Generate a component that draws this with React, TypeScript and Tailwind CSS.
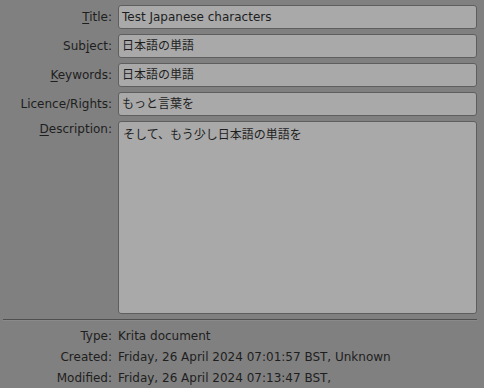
const font = { fontFamily: '"DejaVu Sans", "Noto Sans CJK JP", sans-serif' };

const fields = [
  { pre: "", key: "T", post: "itle:", value: "Test Japanese characters" },
  { pre: "Sub", key: "j", post: "ect:", value: "日本語の単語" },
  { pre: "", key: "K", post: "eywords:", value: "日本語の単語" },
  { pre: "Licence/Rights:", key: "", post: "", value: "もっと言葉を" },
];

const info = [
  { label: "Type:", value: "Krita document" },
  { label: "Created:", value: "Friday, 26 April 2024 07:01:57 BST, Unknown" },
  { label: "Modified:", value: "Friday, 26 April 2024 07:13:47 BST," },
];

const Label = ({ pre, k, post }: { pre: string; k: string; post: string }) => (
  <span className="w-[112px] shrink-0 text-right">
    {pre}
    {k && <span className="underline underline-offset-2">{k}</span>}
    {post}
  </span>
);

export default function App() {
  return (
    <div
      className="h-[388px] w-[484px] overflow-hidden bg-[#808080] text-[12px] text-[#1e1e1e]"
      style={font}
    >
      <div className="flex flex-col gap-[5px] pr-[7px] pt-[5px]">
        {fields.map((f) => (
          <div key={f.value + f.pre} className="flex items-center gap-[6px]">
            <Label pre={f.pre} k={f.key} post={f.post} />
            <div className="flex h-[24px] flex-1 items-center rounded-[3px] border border-[#5e5e5e] bg-[#a9a9a9] px-[3px]">
              {f.value}
            </div>
          </div>
        ))}
        <div className="flex items-start gap-[6px]">
          <div className="-mt-[1px] flex w-[112px] shrink-0 justify-end">
            <Label pre="" k="D" post="escription:" />
          </div>
          <div className="h-[193px] flex-1 rounded-[3px] border border-[#5e5e5e] bg-[#a9a9a9] px-[4px] py-[4px]">
            そして、もう少し日本語の単語を
          </div>
        </div>
      </div>
      <div className="ml-[3px] mr-[7px] mt-[5px] border-t border-b border-t-[#4f4f4f] border-b-[#8a8a8a]" />
      <div className="mt-[6px] flex flex-col gap-[4px]">
        {info.map((r) => (
          <div key={r.label} className="flex h-[17px] items-center gap-[6px]">
            <span className="w-[112px] shrink-0 text-right">{r.label}</span>
            <span>{r.value}</span>
          </div>
        ))}
      </div>
    </div>
  );
}
